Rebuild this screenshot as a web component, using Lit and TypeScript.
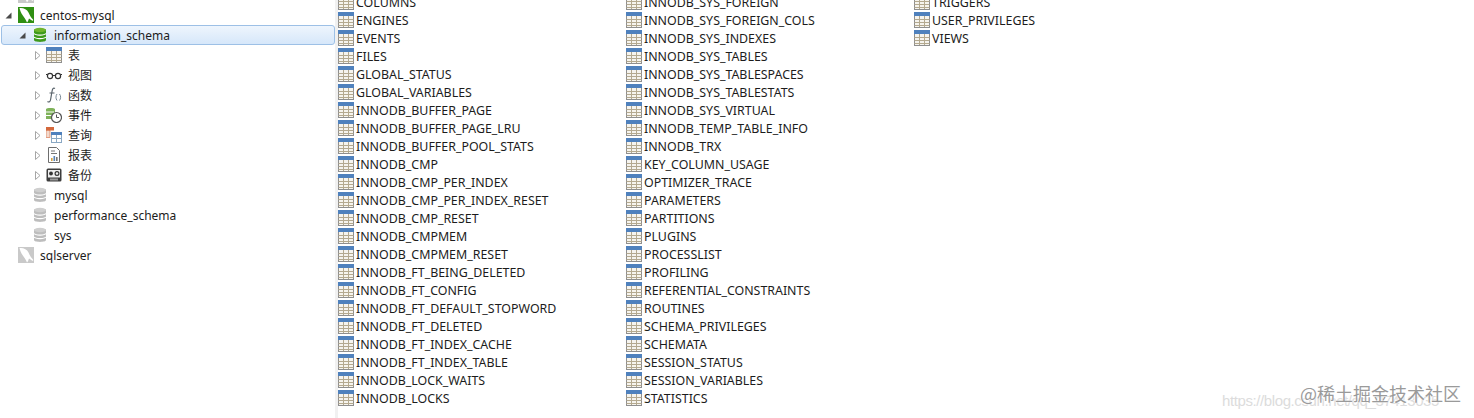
import { LitElement, html, css, svg } from "lit";
import { customElement } from "lit/decorators.js";

const COLS = [
  ["COLUMNS","ENGINES","EVENTS","FILES","GLOBAL_STATUS","GLOBAL_VARIABLES","INNODB_BUFFER_PAGE","INNODB_BUFFER_PAGE_LRU","INNODB_BUFFER_POOL_STATS","INNODB_CMP","INNODB_CMP_PER_INDEX","INNODB_CMP_PER_INDEX_RESET","INNODB_CMP_RESET","INNODB_CMPMEM","INNODB_CMPMEM_RESET","INNODB_FT_BEING_DELETED","INNODB_FT_CONFIG","INNODB_FT_DEFAULT_STOPWORD","INNODB_FT_DELETED","INNODB_FT_INDEX_CACHE","INNODB_FT_INDEX_TABLE","INNODB_LOCK_WAITS","INNODB_LOCKS"],
  ["INNODB_SYS_FOREIGN","INNODB_SYS_FOREIGN_COLS","INNODB_SYS_INDEXES","INNODB_SYS_TABLES","INNODB_SYS_TABLESPACES","INNODB_SYS_TABLESTATS","INNODB_SYS_VIRTUAL","INNODB_TEMP_TABLE_INFO","INNODB_TRX","KEY_COLUMN_USAGE","OPTIMIZER_TRACE","PARAMETERS","PARTITIONS","PLUGINS","PROCESSLIST","PROFILING","REFERENTIAL_CONSTRAINTS","ROUTINES","SCHEMA_PRIVILEGES","SCHEMATA","SESSION_STATUS","SESSION_VARIABLES","STATISTICS"],
  ["TRIGGERS","USER_PRIVILEGES","VIEWS"],
];

const tableIcon = html`<svg class="ti" width="16" height="16" viewBox="0 0 16 16">
  <rect x="0.5" y="0.5" width="15" height="15" fill="#f6f4ee" stroke="#8f8f8f"/>
  <rect x="0" y="0" width="16" height="4" fill="#4f81bd"/>
  <path d="M0.5 7.5H15.5M0.5 10.5H15.5M0.5 13.5H15.5M5.5 4V15M10.5 4V15" stroke="#b4a98f" fill="none"/>
</svg>`;

const dbIcon = (top: string, bot: string) => svg`<svg class="db" width="14" height="16" viewBox="0 0 14 16">
  <path d="M1 3C1 1 13 1 13 3V13C13 15.5 1 15.5 1 13Z" fill="${bot}"/>
  <ellipse cx="7" cy="3" rx="6" ry="2.2" fill="${top}"/>
  <path d="M1 6.5C2.5 8.6 11.5 8.6 13 6.5M1 10C2.5 12.1 11.5 12.1 13 10" stroke="#fff" stroke-width="1.1" fill="none"/>
</svg>`;

const conn = (on: boolean) => html`<svg width="16" height="16" viewBox="0 0 16 16">
  <rect width="16" height="16" fill="${on ? "#2f8f12" : "#c9c9c9"}"/>
  <path d="M1.5 1C5 0.5 9 2 10.5 5.5C11.5 8 13 10.5 15 12.5C15.5 13.5 15 14 14 13.5L11 11.5C10.5 13 10 14.5 9 15.5C8 12.5 6 10.5 4.5 8C3.2 6 2 3.5 1.5 1Z" fill="#fff"/>
</svg>`;

const arrowOpen = html`<svg class="ar" width="9" height="9" viewBox="0 0 9 9"><path d="M7.5 1.5V7.5H1.5Z" fill="#4a4a4a"/></svg>`;
const arrowClosed = html`<svg class="ar" width="9" height="9" viewBox="0 0 9 9"><path d="M2.5 0.5L7 4.5L2.5 8.5Z" fill="#fff" stroke="#a6a6a6"/></svg>`;
const noArrow = html`<span class="ar blank"></span>`;

const viewIcon = html`<svg width="16" height="16" viewBox="0 0 16 16"><circle cx="4" cy="9" r="2.6" fill="none" stroke="#333" stroke-width="1.2"/><circle cx="12" cy="9" r="2.6" fill="none" stroke="#333" stroke-width="1.2"/><path d="M6.6 8.5H9.4M1 8L0 7M15 8L16 7" stroke="#333"/></svg>`;
const fnIcon = html`<svg width="16" height="16" viewBox="0 0 16 16"><path d="M9 1.5C7.2 .5 6.4 2 6 4.5L4.6 12.5C4.2 15 3 15.5 1.5 14.5M3.5 6H8.5" stroke="#59636b" stroke-width="1.2" fill="none"/><path d="M11 7C9.6 9 9.6 11.5 11 13.5M13.5 7C15 9 15 11.5 13.5 13.5" stroke="#7a8a96" fill="none"/></svg>`;
const eventIcon = html`<svg width="16" height="16" viewBox="0 0 16 16"><path d="M0 2C0 0.5 9 0.5 9 2V12H0Z" fill="#7fb25a"/><path d="M0 5H8M0 8.5H6" stroke="#fff"/><circle cx="10.5" cy="10.5" r="5" fill="#fff" stroke="#555" stroke-width="1.2"/><path d="M10.5 7.5V10.5H13" stroke="#555" fill="none"/></svg>`;
const queryIcon = html`<svg width="16" height="16" viewBox="0 0 16 16"><rect x="0" y="0" width="8" height="3.5" fill="#d4683c"/><rect x="0" y="3.5" width="4" height="7" fill="#f3d9cc" stroke="#d4683c" stroke-width=".6"/><rect x="5.5" y="5.5" width="10" height="10" fill="#fff" stroke="#8aa8c4"/><rect x="5" y="5" width="11" height="3" fill="#4f81bd"/><path d="M10.5 8V15.5M6 11.5H15.5" stroke="#8aa8c4"/></svg>`;
const reportIcon = html`<svg width="16" height="16" viewBox="0 0 16 16"><path d="M2.5 .5H10.5L13.5 3.5V15.5H2.5Z" fill="#fff" stroke="#6e6e6e"/><path d="M5 4H9M5 6.5H11" stroke="#777"/><rect x="5" y="11" width="1.6" height="3" fill="#d9a441"/><rect x="7.5" y="9" width="1.6" height="5" fill="#5b85b5"/><rect x="10" y="10" width="1.6" height="4" fill="#777"/></svg>`;
const backupIcon = html`<svg width="16" height="16" viewBox="0 0 16 16"><rect x="0.5" y="1.5" width="15" height="13" rx="1.5" fill="#3d3d3d"/><rect x="2" y="3" width="12" height="7.5" fill="#eee"/><circle cx="5" cy="6.5" r="1.9" fill="#333"/><circle cx="11" cy="6.5" r="1.9" fill="none" stroke="#333" stroke-width="1.2"/><rect x="4" y="11.5" width="8" height="2" fill="#999"/></svg>`;

const CHILDREN = [
  ["表", tableIcon], ["视图", viewIcon], ["函数", fnIcon], ["事件", eventIcon],
  ["查询", queryIcon], ["报表", reportIcon], ["备份", backupIcon],
] as const;

@customElement("app-root")
export class AppRoot extends LitElement {
  static styles = css`
    :host {
      display: flex;
      width: 1474px;
      height: 418px;
      overflow: hidden;
      position: relative;
      background: #fff;
      font-family: "Noto Sans", "Noto Sans CJK SC", sans-serif;
      font-size: 12px;
      color: #1c1c1c;
    }
    .tree {
      width: 335px;
      flex: none;
      margin-top: -15px;
      padding-left: 1px;
      box-sizing: border-box;
      display: flex;
      flex-direction: column;
    }
    .divider { width: 3px; flex: none; background: #f1f1f1; }
    .row {
      height: 20px;
      display: flex;
      align-items: center;
      box-sizing: border-box;
      white-space: nowrap;
    }
    .row.l0 { padding-left: 17px; gap: 6px; }
    .row.l0 .ar { margin-left: -14px; margin-right: -1px; }
    .row.l1 { padding-left: 17px; gap: 0; }
    .row.l1 .ar { margin-right: 6px; }
    .row.l1 .db { margin-right: 7px; }
    .row.l2 { padding-left: 32px; }
    .row.l2 .ar { margin-right: 4px; }
    .row.l2 svg:not(.ar) { margin-right: 6px; }
    .ar { flex: none; width: 9px; height: 9px; display: block; }
    .sel {
      background: linear-gradient(#eef5fd, #d6e7fa);
      border: 1px solid #9dc0e6;
      border-radius: 3px;
      width: 334px;
    }
    .sel.l1 { padding-left: 16px; }
    .lists {
      flex: 1;
      display: grid;
      grid-template-columns: repeat(3, 288px);
      align-content: start;
      margin-top: -7px;
      font-size: 12.4px;
    }
    .col { display: flex; flex-direction: column; }
    .item { height: 18px; display: flex; align-items: center; gap: 2px; white-space: nowrap; }
    .ti { flex: none; }
    .mark {
      position: absolute;
      right: 13px;
      top: 380px;
      font-size: 18px;
      line-height: 26px;
      color: #9a9a9a;
      text-shadow: 0 0 2px #fff, 0 0 2px #fff;
      font-family: "Noto Sans CJK SC", sans-serif;
    }
    .url {
      position: absolute;
      left: 1222px;
      top: 391px;
      line-height: 20px;
      font-family: "Liberation Sans", sans-serif;
      font-size: 15px;
      letter-spacing: -0.4px;
      color: #dcdcdc;
    }
  `;

  render() {
    return html`
      <div class="tree">
        <div class="row l0">${conn(false)}</div>
        <div class="row l0">${arrowOpen}${conn(true)}<span>centos-mysql</span></div>
        <div class="row l1 sel">${arrowOpen}${dbIcon("#6fb52c", "#3e9a1c")}<span>information_schema</span></div>
        ${CHILDREN.map(([n, i]) => html`<div class="row l2">${arrowClosed}${i}<span>${n}</span></div>`)}
        ${["mysql", "performance_schema", "sys"].map(n => html`<div class="row l1">${noArrow}${dbIcon("#cfcfcf", "#bdbdbd")}<span>${n}</span></div>`)}
        <div class="row l0">${conn(false)}<span>sqlserver</span></div>
      </div>
      <div class="divider"></div>
      <div class="lists">
        ${COLS.map(c => html`<div class="col">${c.map(n => html`<div class="item">${tableIcon}<span>${n}</span></div>`)}</div>`)}
      </div>
      <div class="url">https://blog.csdn.net/qq_37413035</div>
      <div class="mark">@稀土掘金技术社区</div>
    `;
  }
}
